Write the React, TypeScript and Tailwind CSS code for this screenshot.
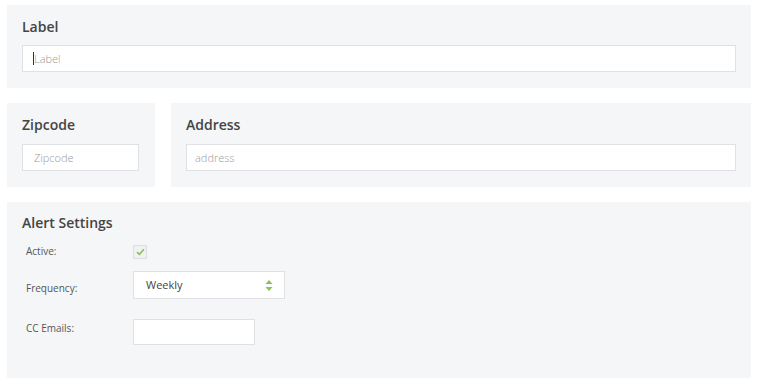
import { useState } from "react";

const font = { fontFamily: '"Open Sans", "Noto Sans", sans-serif' };

function Panel({ children, className = "" }: { children: React.ReactNode; className?: string }) {
  return <div className={`bg-[#f5f6f8] ${className}`}>{children}</div>;
}

export default function App() {
  const [active, setActive] = useState(true);

  return (
    <div className="min-h-[384px] w-[760px] bg-white pl-[7px] pt-[5px]" style={font}>
      <div className="flex w-[744px] flex-col gap-[15px]">
        {/* Label */}
        <Panel className="px-[15px] pb-[16px] pt-[12px]">
          <h3 className="h-[20px] text-[14px] leading-[20px] font-semibold text-[#444]">Label</h3>
          <div className="relative mt-[8px]">
            <input
              placeholder="Label"
              className="h-[27px] w-full border border-[#dfe1e4] bg-white px-[11px] text-[11px] font-light text-[#444] outline-none placeholder:text-[#9a9a9a]"
            />
            <span className="absolute left-[11px] top-[7px] h-[13px] w-px bg-[#333]" />
          </div>
        </Panel>

        {/* Zipcode + Address */}
        <div className="flex gap-[16px]">
          <Panel className="w-[148px] px-[15px] pb-[16px] pt-[12px]">
            <h3 className="h-[20px] text-[14px] leading-[20px] font-semibold text-[#444]">Zipcode</h3>
            <input
              placeholder="Zipcode"
              className="mt-[9px] h-[27px] w-[117px] border border-[#dfe1e4] bg-white px-[11px] text-[11px] font-light outline-none placeholder:text-[#9a9a9a]"
            />
          </Panel>
          <Panel className="flex-1 px-[15px] pb-[16px] pt-[12px]">
            <h3 className="h-[20px] text-[14px] leading-[20px] font-semibold text-[#444]">Address</h3>
            <input
              placeholder="address"
              className="mt-[9px] h-[27px] w-full border border-[#dfe1e4] bg-white px-[8px] text-[11px] font-light outline-none placeholder:text-[#9a9a9a]"
            />
          </Panel>
        </div>

        {/* Alert Settings */}
        <Panel className="px-[15px] pb-[33px] pt-[11px]">
          <h3 className="h-[20px] text-[14px] leading-[20px] font-semibold text-[#444]">Alert Settings</h3>
          <div className="mt-[11px] flex items-center">
            <span className="w-[111px] pl-[4px] text-[10px] text-[#555]">Active:</span>
            <button
              onClick={() => setActive(!active)}
              className="flex h-[14px] w-[14px] items-center justify-center border border-[#dcdfe2] bg-[#f0f1f3]"
            >
              {active && (
                <svg width="9" height="8" viewBox="0 0 9 8">
                  <path d="M1 4.2 L3.4 6.4 L8 1.3" fill="none" stroke="#8cc152" strokeWidth="1.6" />
                </svg>
              )}
            </button>
          </div>
          <div className="mt-[12px] flex items-center">
            <span className="w-[111px] pl-[4px] pt-[6px] text-[10px] text-[#555]">Frequency:</span>
            <div className="flex h-[28px] w-[152px] items-center justify-between border border-[#dfe1e4] bg-white pl-[12px] pr-[11px]">
              <span className="text-[11px] text-[#444]">Weekly</span>
              <svg width="8" height="13" viewBox="0 0 8 13">
                <path d="M4 1 L7.5 5 L0.5 5 Z" fill="#8cc152" />
                <path d="M0.5 8 L7.5 8 L4 12 Z" fill="#8cc152" />
              </svg>
            </div>
          </div>
          <div className="mt-[20px] flex items-start">
            <span className="w-[111px] pl-[4px] pt-[2px] text-[10px] text-[#555]">CC Emails:</span>
            <input className="h-[26px] w-[122px] border border-[#dfe1e4] bg-white px-2 text-[11px] outline-none" />
          </div>
        </Panel>
      </div>
    </div>
  );
}
